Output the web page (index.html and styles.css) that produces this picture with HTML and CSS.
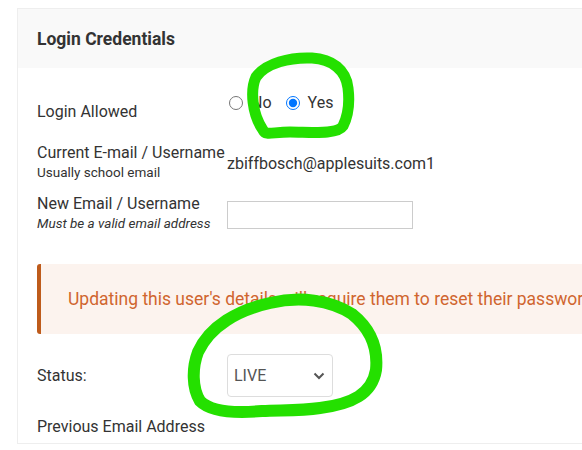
FILE: index.html
```html
<!DOCTYPE html>
<html lang="en">
<head>
    <meta charset="UTF-8">
    <meta name="viewport" content="width=device-width, initial-scale=1.0">
    <title>Login Credentials</title>
    <link rel="stylesheet" href="styles.css">
</head>
<body>
    <div class="page">
        <div class="card">
            <div class="card-header">Login Credentials</div>
            <div class="card-body">
                <div class="form-row row-login">
                    <div class="label">Login Allowed</div>
                    <div class="radios">
                        <label class="radio"><input type="radio" name="allowed"> No</label>
                        <label class="radio"><input type="radio" name="allowed" checked> Yes</label>
                    </div>
                </div>

                <div class="form-row row-current">
                    <div class="label">
                        Current E-mail / Username
                        <small>Usually school email</small>
                    </div>
                    <div class="value">zbiffbosch@applesuits.com1</div>
                </div>

                <div class="form-row row-new">
                    <div class="label">
                        New Email / Username
                        <small><em>Must be a valid email address</em></small>
                    </div>
                    <div class="control"><input type="text" class="text-input"></div>
                </div>

                <div class="alert">Updating this user's details will require them to reset their password.</div>

                <div class="form-row row-status">
                    <div class="label">Status:</div>
                    <div class="select">
                        <span>LIVE</span>
                        <svg width="12" height="8" viewBox="0 0 12 8"><path d="M1.5 1.5 L6 6 L10.5 1.5" fill="none" stroke="#555" stroke-width="2"/></svg>
                    </div>
                </div>

                <div class="form-row row-prev">
                    <div class="label">Previous Email Address</div>
                </div>
            </div>
        </div>

        <!-- marker annotations drawn over the screenshot -->
        <svg class="marker" width="582" height="450" viewBox="0 0 582 450">
            <path d="M263 130 C252 114 250 90 256 77 C266 63 290 57 312 58 C332 59 346 70 348 88 C350 104 347 118 343 126 C337 135 310 132 290 132 C272 132 266 136 263 130"
                  fill="none" stroke="#24e000" stroke-width="11" stroke-linecap="round"/>
            <path d="M198 352 C210 326 238 310 270 303 C300 296 330 300 352 314 C372 330 378 350 376 370 C372 394 352 404 320 408 C300 411 280 410 262 411 C240 413 212 413 200 401 C192 388 192 368 198 352"
                  fill="none" stroke="#24e000" stroke-width="12" stroke-linecap="round"/>
        </svg>
    </div>
</body>
</html>
```

FILE: styles.css
```css
body {
    margin: 0;
    font-family: 'Roboto', 'Liberation Sans', sans-serif;
    color: #333;
    background: #fff;
    overflow: hidden;
}

.page {
    position: relative;
    padding: 8px 0 0 17px;
}

.card {
    width: 700px;
    border: 1px solid #eee;
    background: #fff;
}

.card-header {
    height: 59px;
    line-height: 60px;
    padding: 0 19px;
    background: #f9f9f9;
    font-weight: bold;
    font-size: 17.5px;
}

.card-body {
    padding: 24px 19px 6px 19px;
}

.form-row {
    display: grid;
    grid-template-columns: 190px 1fr;
    font-size: 16px;
}

.label {
    line-height: 20px;
}

.label small {
    display: block;
    font-size: 13.5px;
    line-height: 18px;
}

.row-login .label {
    padding-top: 10px;
}

.radios {
    display: flex;
    align-items: center;
    height: 22px;
}

.radio {
    display: flex;
    align-items: center;
    margin-right: 12px;
    line-height: 20px;
}

.radio input {
    width: 14px;
    height: 14px;
    margin: 0 8px 0 2px;
}

.row-current {
    margin-top: 21px;
}

.value {
    padding-top: 11px;
    line-height: 20px;
}

.row-new {
    margin-top: 13px;
}

.control {
    padding-top: 7px;
}

.text-input {
    box-sizing: border-box;
    width: 186px;
    height: 28px;
    border: 1px solid #ccc;
    margin: 0;
}

.alert {
    margin-top: 32px;
    height: 70px;
    line-height: 70px;
    background: #fcf3ee;
    border-left: 4px solid #be5b1b;
    border-radius: 3px 0 0 3px;
    padding-left: 27px;
    color: #d0652f;
    font-size: 17.5px;
    white-space: nowrap;
}

.row-status {
    margin-top: 20px;
    align-items: center;
}

.select {
    box-sizing: border-box;
    width: 106px;
    height: 43px;
    border: 1px solid #ddd;
    border-radius: 4px;
    display: flex;
    align-items: center;
    justify-content: space-between;
    padding: 0 7px 0 6px;
    color: #555;
}

.row-prev {
    margin-top: 20px;
}

.marker {
    position: absolute;
    left: 0;
    top: 0;
}
```
